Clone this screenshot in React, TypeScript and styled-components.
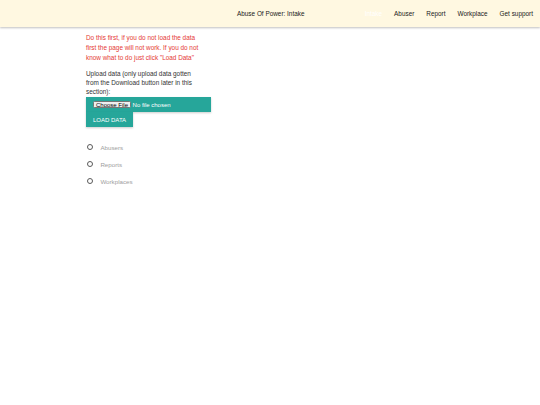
import React from 'react'
import styled, { createGlobalStyle } from 'styled-components'

const Global = createGlobalStyle`
  body {
    margin: 0;
    background: #ffffff;
    font-family: "Liberation Sans", Arial, sans-serif;
  }
`

const App = () => {
  return (
    <>
      <Global />
      <Nav>
        <Title>Abuse Of Power: Intake</Title>
        <Links>
          <Link active>Intake</Link>
          <Link>Abuser</Link>
          <Link>Report</Link>
          <Link>Workplace</Link>
          <Link>Get support</Link>
        </Links>
      </Nav>
      <Main>
        <Column>
          <Warning>
            Do this first, if you do not load the data first the page will not work. If you do not
            know what to do just click "Load Data"
          </Warning>
          <Upload>
            Upload data (only upload data gotten from the Download button later in this section):
          </Upload>
          <FileBox>
            <ChooseButton>Choose File</ChooseButton>
            <NoFile>No file chosen</NoFile>
          </FileBox>
          <LoadButton>LOAD DATA</LoadButton>
          <Options>
            <Option>
              <Circle />
              <OptionLabel>Abusers</OptionLabel>
            </Option>
            <Option>
              <Circle />
              <OptionLabel>Reports</OptionLabel>
            </Option>
            <Option>
              <Circle />
              <OptionLabel>Workplaces</OptionLabel>
            </Option>
          </Options>
        </Column>
      </Main>
    </>
  )
}

export default App

const Nav = styled.div`
  height: 27px;
  background: #fff8e1;
  box-shadow: 0 1px 2px rgba(0, 0, 0, 0.25);
  display: flex;
  align-items: center;
  font-size: 6.4px;
  color: #1a1a1a;
`

const Title = styled.div`
  margin-left: 237px;
  flex: 1;
`

const Links = styled.div`
  display: flex;
  align-items: center;
  padding-right: 7px;
  gap: 12px;
`

const Link = styled.div<{ active?: boolean }>`
  color: ${p => (p.active ? '#ffffff' : '#1a1a1a')};
`

const Main = styled.div`
  padding: 6px 0 0 86px;
`

const Column = styled.div`
  width: 125px;
  display: flex;
  flex-direction: column;
  align-items: flex-start;
`

const Warning = styled.div`
  max-width: 116px;
  color: #e53935;
  font-size: 6.4px;
  line-height: 10px;
`

const Upload = styled.div`
  max-width: 116px;
  margin-top: 6px;
  color: #333;
  font-size: 6.4px;
  line-height: 9px;
`

const FileBox = styled.div`
  width: 125px;
  height: 15px;
  margin-top: 1px;
  background: #26a69a;
  box-shadow: 0 1px 2px rgba(0, 0, 0, 0.2);
  display: flex;
  align-items: center;
  padding-left: 7px;
  box-sizing: border-box;
`

const ChooseButton = styled.div`
  box-sizing: border-box;
  height: 7px;
  padding: 0 2px;
  background: #efefef;
  border: 0.8px solid #767676;
  border-radius: 1.5px;
  font-size: 6px;
  line-height: 6px;
  display: flex;
  align-items: center;
  color: #000;
`

const NoFile = styled.div`
  margin-left: 1.6px;
  font-size: 6px;
  color: #fff;
`

const LoadButton = styled.div`
  height: 15px;
  padding: 0 7px;
  background: #26a69a;
  color: #fff;
  font-size: 6px;
  display: flex;
  align-items: center;
  box-shadow: 0 1px 2px rgba(0, 0, 0, 0.2);
`

const Options = styled.div`
  margin-top: 15px;
  display: flex;
  flex-direction: column;
  gap: 7px;
`

const Option = styled.div`
  display: flex;
  align-items: center;
  height: 10px;
`

const Circle = styled.div`
  width: 4px;
  height: 4px;
  border: 1.2px solid #5a5a5a;
  border-radius: 50%;
  margin-left: 1.2px;
`

const OptionLabel = styled.div`
  margin-left: 7.2px;
  font-size: 6.2px;
  color: #9e9e9e;
`
